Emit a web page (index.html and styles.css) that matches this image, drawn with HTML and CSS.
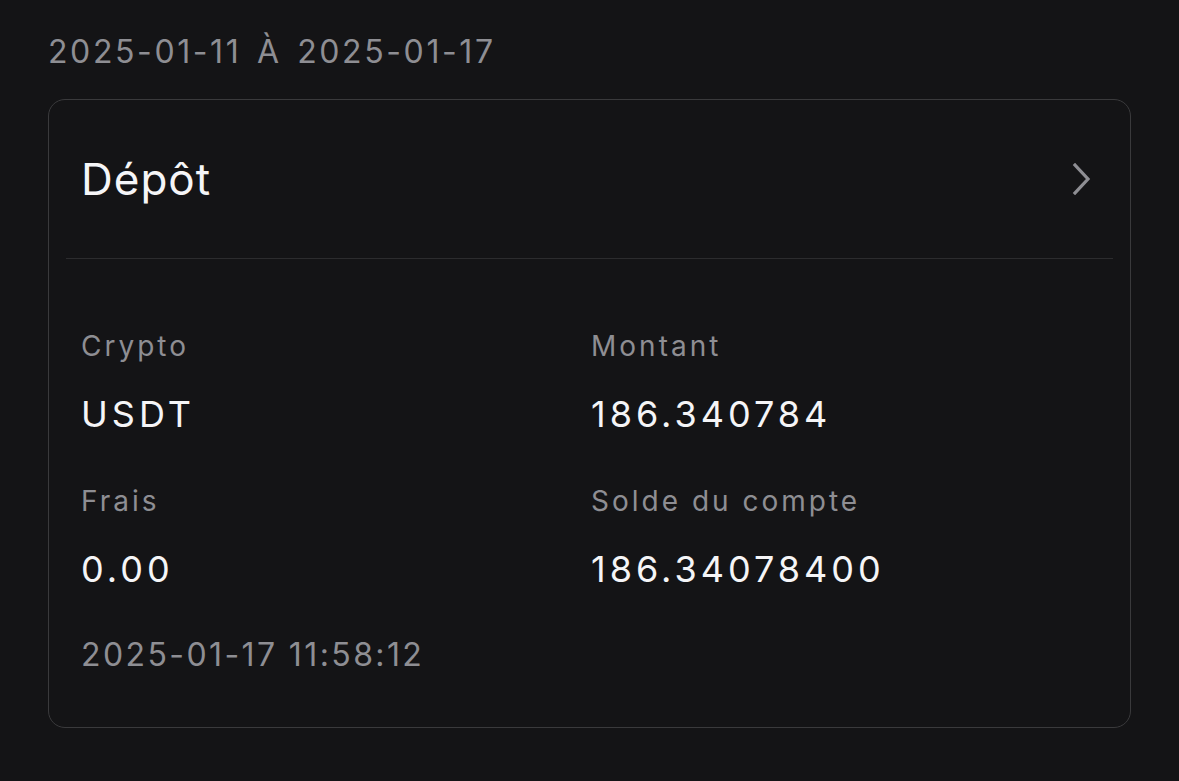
FILE: index.html
```html
<!DOCTYPE html>
<html lang="fr">

<head>
  <meta charset="UTF-8">
  <meta name="viewport" content="width=device-width, initial-scale=1.0">
  <title>Historique des dépôts</title>
  <link rel="stylesheet" href="styles.css">
</head>

<body>
  <div class="period">2025-01-11 À 2025-01-17</div>

  <div class="record-card">
    <div class="record-head">
      <span class="record-title">Dépôt</span>
      <svg class="chevron" width="22" height="32" viewBox="0 0 22 32" aria-hidden="true">
        <path d="M4 2 L17 16 L4 30" fill="none" stroke="#8e8e93" stroke-width="3.2" stroke-linecap="square" stroke-linejoin="miter"/>
      </svg>
    </div>

    <div class="record-body">
      <div class="record-grid">
        <div class="field">
          <div class="field-label">Crypto</div>
          <div class="field-value">USDT</div>
        </div>
        <div class="field">
          <div class="field-label">Montant</div>
          <div class="field-value">186.340784</div>
        </div>
        <div class="field">
          <div class="field-label">Frais</div>
          <div class="field-value">0.00</div>
        </div>
        <div class="field">
          <div class="field-label">Solde du compte</div>
          <div class="field-value">186.34078400</div>
        </div>
      </div>
      <div class="record-time">2025-01-17 11:58:12</div>
    </div>
  </div>
</body>

</html>
```

FILE: styles.css
```css
body {
  font-family: Inter, 'Noto Sans', 'Liberation Sans', sans-serif;
  background-color: #141416;
  color: #f5f5f7;
  margin: 0;
  padding: 32px 48px 0;
}

.period {
  font-size: 32px;
  line-height: 40px;
  letter-spacing: 2.6px;
  word-spacing: 4px;
  color: #8e8e93;
  margin-bottom: 27px;
}

.record-card {
  border: 1px solid #3a3a3c;
  border-radius: 17px;
  padding: 0 17px;
}

.record-head {
  display: flex;
  align-items: center;
  justify-content: space-between;
  height: 158px;
  padding: 0 20px 0 15px;
  border-bottom: 1px solid #2c2c2e;
}

.record-title {
  font-size: 44px;
  line-height: 54px;
  letter-spacing: 1px;
}

.chevron {
  display: block;
}

.record-body {
  padding: 69px 15px 53px;
}

.record-grid {
  display: grid;
  grid-template-columns: 510px 1fr;
  row-gap: 49px;
}

.field-label {
  font-size: 28px;
  line-height: 36px;
  letter-spacing: 3px;
  color: #8e8e93;
  margin-bottom: 29px;
}

.field-value {
  font-size: 36px;
  line-height: 42px;
  letter-spacing: 4px;
  margin-bottom: -1px;
}

.record-time {
  margin-top: 47px;
  font-size: 32px;
  line-height: 38px;
  letter-spacing: 2.4px;
  color: #8e8e93;
}
```
